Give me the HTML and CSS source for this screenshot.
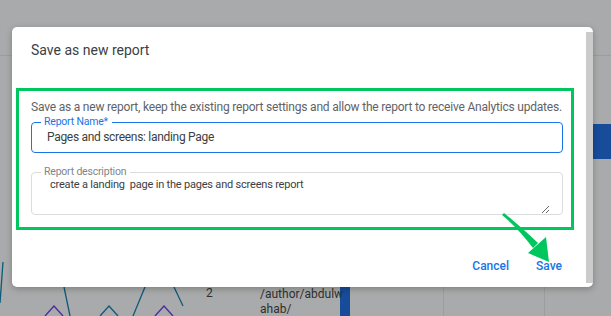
FILE: index.html
```html
<!DOCTYPE html>
<html lang="en">
<head>
    <meta charset="UTF-8">
    <title>Save as new report</title>
    <link rel="stylesheet" href="styles.css">
</head>
<body>
    <!-- page under the modal, dimmed -->
    <svg class="backdrop" width="611" height="316" viewBox="0 0 611 316">
        <line x1="0" y1="55.5" x2="611" y2="55.5" stroke="#9c9d9e" stroke-width="1"/>
        <rect x="593" y="124" width="18" height="35" fill="#164c9a"/>
        <line x1="443.5" y1="287" x2="443.5" y2="316" stroke="#9c9d9e"/>
        <line x1="544.5" y1="287" x2="544.5" y2="316" stroke="#9c9d9e"/>
        <rect x="340" y="287" width="10" height="29" fill="#164c9a"/>
        <g fill="none" stroke="#0c5a78" stroke-width="1.3">
            <line x1="3" y1="262" x2="0" y2="303"/>
            <line x1="64" y1="287" x2="70" y2="316"/>
            <line x1="145" y1="287" x2="133" y2="316"/>
            <line x1="174" y1="287" x2="183" y2="306"/>
            <polyline points="100,316 109,306 118,316"/>
        </g>
        <g fill="none" stroke="#4b2aa0" stroke-width="1.3">
            <polyline points="45,316 54,306 63,316"/>
            <polyline points="155,316 164,306 173,316"/>
        </g>
        <text x="206" y="297" class="bg-text">2</text>
        <text x="260" y="298" class="bg-text">/author/abdulw</text>
        <text x="260" y="313" class="bg-text">ahab/</text>
    </svg>

    <div class="overlay">
        <div class="dialog">
            <div class="dialog-body">
                <h2 class="dialog-title">Save as new report</h2>

                <div class="highlight">
                    <p class="hint">Save as a new report, keep the existing report settings and allow the report to receive Analytics updates.</p>

                    <fieldset class="field field-active">
                        <legend>Report Name*</legend>
                        <input type="text" value="Pages and screens: landing Page">
                    </fieldset>

                    <fieldset class="field">
                        <legend>Report description</legend>
                        <textarea rows="2">create a landing  page in the pages and screens report</textarea>
                    </fieldset>
                </div>

                <div class="actions">
                    <button class="btn">Cancel</button>
                    <button class="btn">Save</button>
                </div>
            </div>
            <div class="scrollbar"></div>
        </div>
    </div>

    <!-- annotation arrow -->
    <svg class="arrow" width="611" height="316" viewBox="0 0 611 316">
        <path d="M502 215 Q518 228 533 248 L538 243 Q520 226 504 213 Z" fill="#00c65e"/>
        <polygon points="528,253 546,237 549,262" fill="#00c65e"/>
    </svg>
</body>
</html>
```

FILE: styles.css
```css
body {
    margin: 0;
    width: 611px;
    height: 316px;
    overflow: hidden;
    background-color: #a9aaab;
    font-family: Roboto, Arial, sans-serif;
}

.backdrop {
    position: absolute;
    top: 0;
    left: 0;
}

.bg-text {
    font-family: Roboto, Arial, sans-serif;
    font-size: 12px;
    fill: #2e2f30;
}

.overlay {
    position: absolute;
    top: 0;
    left: 0;
    padding: 27px 0 0 12px;
}

.dialog {
    display: flex;
    width: 581px;
    height: 260px;
    background-color: #fff;
    border-radius: 5px;
    box-shadow: 0 2px 6px rgba(0, 0, 0, 0.25);
}

.dialog-body {
    width: 574px;
}

.scrollbar {
    width: 7px;
    margin: 5px 0 4px;
    background-color: #cbcbcb;
}

.dialog-title {
    margin: 0;
    padding: 13px 0 0 19px;
    font-size: 14px;
    line-height: 20px;
    font-weight: 400;
    color: #3c4043;
}

.highlight {
    margin: 28px 0 0 4px;
    width: 532px;
    padding: 8px 8px 12px 12px;
    border: 3px solid #00c65e;
}

.hint {
    margin: 0 0 1px;
    font-size: 12px;
    line-height: 16px;
    letter-spacing: -0.2px;
    color: #5f6368;
    white-space: nowrap;
}

.field {
    margin: 0;
    padding: 0 12px 0 9px;
    border: 1px solid #dadce0;
    border-radius: 4px;
}

.field legend {
    padding: 0 4px 0 3px;
    font-size: 10.5px;
    line-height: 12px;
    letter-spacing: -0.2px;
    color: #80868b;
}

.field-active {
    border-color: #1a73e8;
    height: 37px;
    box-sizing: border-box;
}

.field-active legend {
    color: #1a73e8;
}

.field + .field {
    margin-top: 13px;
}

.field input {
    display: block;
    width: 100%;
    border: none;
    outline: none;
    padding: 0 0 0 6px;
    margin: 0;
    font-family: Roboto, Arial, sans-serif;
    font-size: 12px;
    line-height: 18px;
    letter-spacing: -0.3px;
    color: #3c4043;
}

.field textarea {
    display: block;
    width: 100%;
    height: 36px;
    box-sizing: border-box;
    border: none;
    outline: none;
    padding: 0 0 0 9px;
    margin: 0;
    font-family: Roboto, Arial, sans-serif;
    font-size: 11px;
    line-height: 13px;
    letter-spacing: -0.2px;
    color: #3c4043;
    resize: vertical;
}

.actions {
    display: flex;
    justify-content: flex-end;
    gap: 11px;
    padding: 18px 16px 0 0;
}

.btn {
    height: 36px;
    padding: 0 8px;
    border: none;
    background: none;
    font-family: Roboto, Arial, sans-serif;
    font-size: 12px;
    font-weight: 500;
    color: #1a73e8;
    cursor: pointer;
}

.arrow {
    position: absolute;
    top: 0;
    left: 0;
    pointer-events: none;
}
```
